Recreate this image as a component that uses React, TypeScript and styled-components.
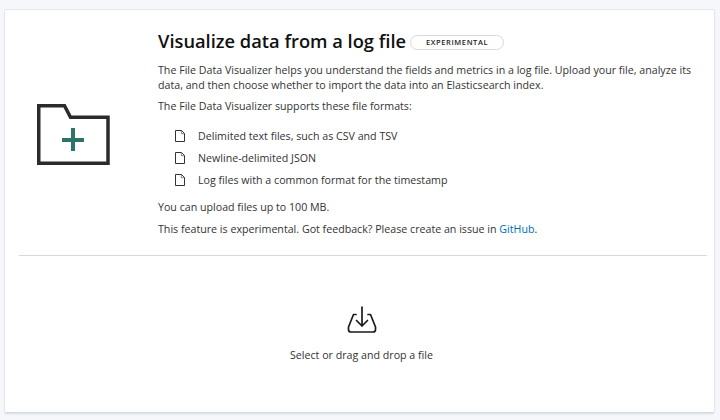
import React from 'react';
import styled, { createGlobalStyle } from 'styled-components';

const GlobalStyle = createGlobalStyle`
  html, body {
    margin: 0;
    padding: 0;
    background: #f5f7fa;
    font-family: "Open Sans", "Liberation Sans", sans-serif;
    color: #333;
  }
`;

const Page = styled.div`
  width: 720px;
  height: 420px;
  box-sizing: border-box;
  padding: 9px 5px 7px 4px;
`;

const Panel = styled.div`
  height: 100%;
  box-sizing: border-box;
  background: #fff;
  border: 1px solid #e3e6ef;
  border-bottom-color: #d3dae6;
  border-radius: 2px;
  box-shadow: 0 2px 2px -1px rgba(152, 162, 179, 0.3);
  padding: 0 7px 0 14px;
  display: flex;
  flex-direction: column;
`;

const Intro = styled.div`
  display: flex;
  height: 245px;
  border-bottom: 1px solid #d9d9d9;
`;

const IconColumn = styled.div`
  width: 139px;
  flex: none;
  padding: 94px 0 0 18px;
  box-sizing: border-box;
`;

const Content = styled.div`
  flex: 1;
  padding-top: 19px;
`;

const TitleRow = styled.div`
  display: flex;
  align-items: center;
  gap: 4px;
  margin-bottom: 10px;
`;

const Title = styled.h1`
  margin: 0;
  font-size: 18.3px;
  line-height: 24px;
  font-weight: 600;
  color: #111;
`;

const Badge = styled.span`
  display: inline-block;
  width: 94px;
  height: 15px;
  margin-top: 2px;
  box-sizing: border-box;
  border: 1px solid #d9d9d9;
  border-radius: 8px;
  text-align: center;
  font-size: 7.5px;
  line-height: 13px;
  font-weight: 600;
  letter-spacing: 0.6px;
  color: #222;
`;

const Text = styled.p`
  margin: 0 0 7px;
  font-size: 10.66px;
  line-height: 15px;
  color: #333;
`;

const Lead = styled(Text)`
  margin-bottom: 6px;
`;

const Formats = styled.ul`
  list-style: none;
  margin: 14px 0 13px;
  padding: 0 0 0 17px;
`;

const Format = styled.li`
  display: flex;
  align-items: center;
  gap: 13px;
  height: 15px;
  margin-bottom: 7px;
  font-size: 10.66px;
  color: #333;
`;

const Link = styled.a`
  color: #006bb4;
  text-decoration: none;
`;

const Drop = styled.div`
  flex: 1;
  display: flex;
  flex-direction: column;
  align-items: center;
  padding: 50px 3px 0 0;
`;

const DropLabel = styled.div`
  margin-top: 14px;
  font-size: 10.66px;
  line-height: 15px;
  color: #333;
`;

const FolderIcon = () => (
  <svg width="73" height="61" viewBox="0 0 73 61" fill="none" style={{ display: 'block' }}>
    <path d="M1.75 1.75H27.500L33.500 13.250H71V59.250H1.750Z" stroke="#2b2b2b" strokeWidth="3.500" />
    <path d="M36 24V47M25 36H47" stroke="#2a7568" strokeWidth="4" />
  </svg>
);

const FileIcon = () => (
  <svg width="10" height="12" viewBox="0 0 10 12" fill="none">
    <path d="M.5.5H6.500L9.500 3.500V11.500H.5Z" stroke="#333" />
    <path d="M6.300.5V3.700H9.500" stroke="#333" strokeWidth=".6" />
  </svg>
);

const UploadIcon = () => (
  <svg width="32" height="28" viewBox="0 0 32 28" fill="none" stroke="#1a1a1a" strokeWidth="1.700" strokeLinecap="round" strokeLinejoin="round">
    <path d="M16 1V20M10.500 14.500 16 20l5.500-5.500" />
    <path d="M10 8.500H7.500L2.500 21v2.500c0 1.500 1 2.500 2.500 2.500h22c1.500 0 2.500-1 2.500-2.500V21L24.500 8.500H22" />
  </svg>
);

const formats = [
  'Delimited text files, such as CSV and TSV',
  'Newline-delimited JSON',
  'Log files with a common format for the timestamp',
];

const App: React.FC = () => (
  <Page>
    <GlobalStyle />
    <Panel>
      <Intro>
        <IconColumn>
          <FolderIcon />
        </IconColumn>
        <Content>
          <TitleRow>
            <Title>Visualize data from a log file</Title>
            <Badge>EXPERIMENTAL</Badge>
          </TitleRow>
          <Lead>
            The File Data Visualizer helps you understand the fields and metrics in a log file. Upload your file, analyze its
            <br />
            data, and then choose whether to import the data into an Elasticsearch index.
          </Lead>
          <Text>The File Data Visualizer supports these file formats:</Text>
          <Formats>
            {formats.map((format) => (
              <Format key={format}>
                <FileIcon />
                {format}
              </Format>
            ))}
          </Formats>
          <Text>You can upload files up to 100 MB.</Text>
          <Text>
            This feature is experimental. Got feedback? Please create an issue in <Link href="#">GitHub</Link>.
          </Text>
        </Content>
      </Intro>
      <Drop>
        <UploadIcon />
        <DropLabel>Select or drag and drop a file</DropLabel>
      </Drop>
    </Panel>
  </Page>
);

export default App;
